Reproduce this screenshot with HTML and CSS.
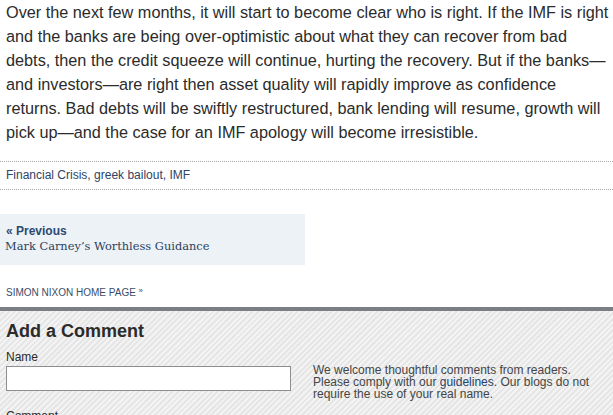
FILE: index.html
```html
<!DOCTYPE html>
<html>
<head>
<meta charset="utf-8">
<link rel="stylesheet" href="styles.css">
</head>
<body>
<div class="page">
  <div class="article">
    <p class="body-text">Over the next few months, it will start to become clear who is right. If the IMF is right<br>and the banks are being over-optimistic about what they can recover from bad<br>debts, then the credit squeeze will continue, hurting the recovery. But if the banks—<br>and investors—are right then asset quality will rapidly improve as confidence<br>returns. Bad debts will be swiftly restructured, bank lending will resume, growth will<br>pick up—and the case for an IMF apology will become irresistible.</p>
  </div>
  <div class="tags"><a href="#">Financial Crisis</a>, <a href="#">greek bailout</a>, <a href="#">IMF</a></div>
  <div class="prev-box">
    <div class="prev-label">« Previous</div>
    <div class="prev-title">Mark Carney’s Worthless Guidance</div>
  </div>
  <div class="home-link">SIMON NIXON HOME PAGE <span class="raquo">»</span></div>
  <div class="comments">
    <h2 class="comments-title">Add a Comment</h2>
    <div class="form-row">
      <div class="field">
        <label class="field-label">Name</label>
        <div class="input"></div>
      </div>
      <p class="note">We welcome thoughtful comments from readers. Please comply with our <a href="#">guidelines</a>. Our blogs do not require the use of your real name.</p>
    </div>
    <label class="field-label comment-label">Comment</label>
  </div>
</div>
</body>
</html>
```

FILE: styles.css
```css
html, body {
  margin: 0;
  padding: 0;
  background: #fff;
}
body {
  width: 613px;
  height: 415px;
  overflow: hidden;
  font-family: "Liberation Sans", Arial, sans-serif;
}
.page {
  width: 613px;
}
.article {
  padding-left: 6px;
  width: 607px;
}
.body-text {
  margin: 0;
  font-size: 16.25px;
  line-height: 24px;
  color: #2b2b2b;
  white-space: nowrap;
}
.tags {
  margin-top: 17px;
  border-top: 1px dotted #a8a8a8;
  border-bottom: 1px dotted #a8a8a8;
  height: 27px;
  line-height: 27px;
  padding-left: 6px;
  font-size: 12px;
  color: #2e4466;
}
.tags a {
  color: #2e4466;
  text-decoration: none;
}
.prev-box {
  margin-top: 24px;
  width: 299px;
  height: 41px;
  background: #edf2f7;
  padding-left: 6px;
  padding-top: 10px;
}
.prev-label {
  font-size: 12px;
  font-weight: bold;
  color: #2b4a72;
  line-height: 14px;
}
.prev-title {
  font-family: "DejaVu Serif", Georgia, serif;
  font-size: 11.4px;
  line-height: 16px;
  color: #2b3f5c;
  margin-left: -1px;
}
.home-link {
  margin-top: 19px;
  padding-left: 6px;
  font-size: 10px;
  line-height: 14px;
  color: #3a4d68;
}
.raquo {
  font-size: 8px;
  vertical-align: 3px;
}
.comments {
  margin-top: 7px;
  border-top: 4px solid #7b7f84;
  background-color: #efefef;
  background-image: repeating-linear-gradient(135deg, #f3f3f3 0px, #f3f3f3 2px, #e6e6e6 2px, #e6e6e6 4px);
  padding: 9px 6px 0 6px;
  height: 200px;
}
.comments-title {
  margin: 0;
  font-size: 18px;
  font-weight: bold;
  line-height: 22px;
  color: #2b2b2b;
}
.form-row {
  display: flex;
  gap: 22px;
  margin-top: 8px;
}
.field {
  display: flex;
  flex-direction: column;
}
.field-label {
  display: block;
  font-size: 12px;
  line-height: 14px;
  color: #2b2b2b;
}
.input {
  margin-top: 2px;
  width: 283px;
  height: 23px;
  border: 1px solid #8e8e8e;
  background: #fff;
}
.note {
  margin: 0;
  padding-top: 14px;
  width: 300px;
  font-size: 12px;
  line-height: 12px;
  color: #454545;
}
.note a {
  color: #23416b;
  text-decoration: none;
}
.comment-label {
  margin-top: 9px;
}
```
